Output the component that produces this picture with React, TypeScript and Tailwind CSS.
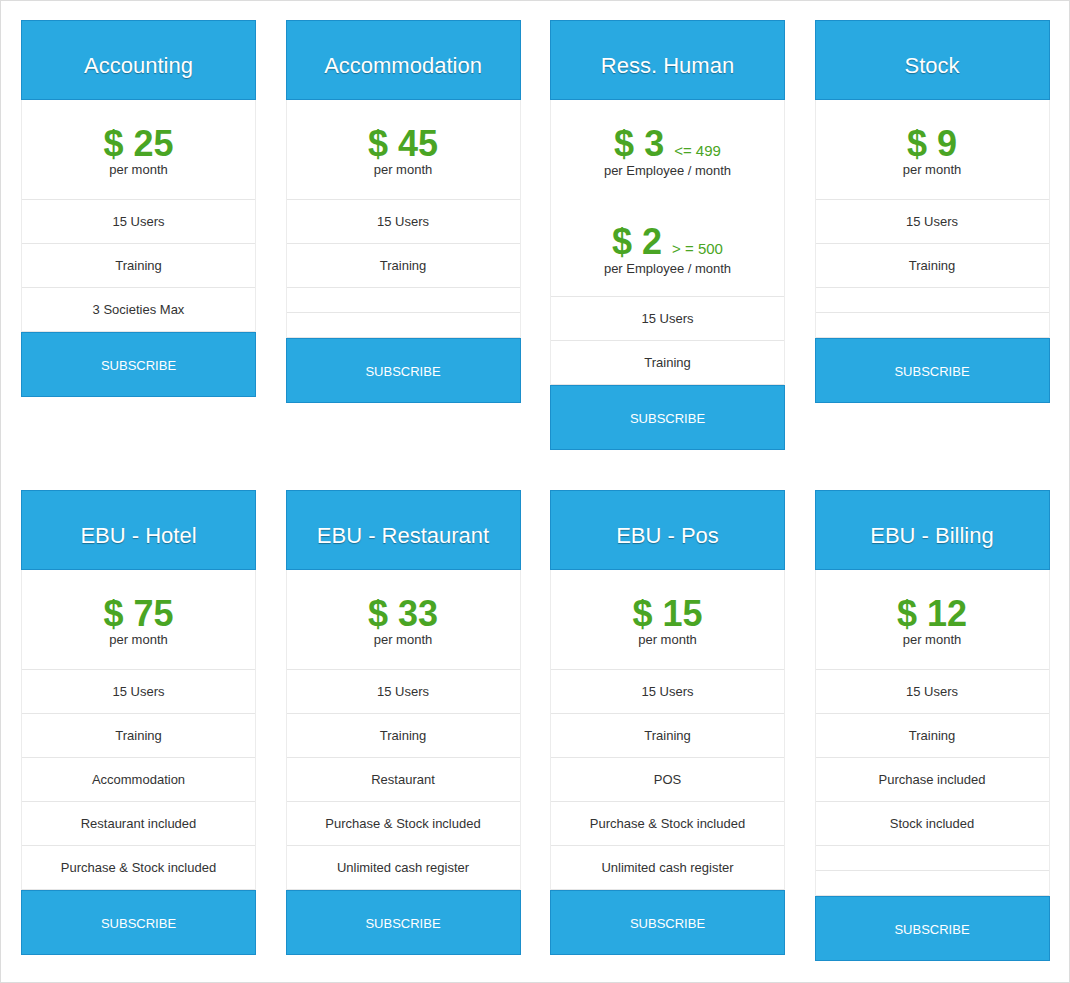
type Price = { amount: string; note?: string; unit: string };

interface Plan {
  name: string;
  prices: Price[];
  rows: string[];
  empty?: number;
}

const PLANS: Plan[] = [
  { name: "Accounting", prices: [{ amount: "25", unit: "per month" }], rows: ["15 Users", "Training", "3 Societies Max"] },
  { name: "Accommodation", prices: [{ amount: "45", unit: "per month" }], rows: ["15 Users", "Training"], empty: 2 },
  {
    name: "Ress. Human",
    prices: [
      { amount: "3", note: "<= 499", unit: "per Employee / month" },
      { amount: "2", note: "> = 500", unit: "per Employee / month" },
    ],
    rows: ["15 Users", "Training"],
  },
  { name: "Stock", prices: [{ amount: "9", unit: "per month" }], rows: ["15 Users", "Training"], empty: 2 },
  {
    name: "EBU - Hotel",
    prices: [{ amount: "75", unit: "per month" }],
    rows: ["15 Users", "Training", "Accommodation", "Restaurant included", "Purchase & Stock included"],
  },
  {
    name: "EBU - Restaurant",
    prices: [{ amount: "33", unit: "per month" }],
    rows: ["15 Users", "Training", "Restaurant", "Purchase & Stock included", "Unlimited cash register"],
  },
  {
    name: "EBU - Pos",
    prices: [{ amount: "15", unit: "per month" }],
    rows: ["15 Users", "Training", "POS", "Purchase & Stock included", "Unlimited cash register"],
  },
  {
    name: "EBU - Billing",
    prices: [{ amount: "12", unit: "per month" }],
    rows: ["15 Users", "Training", "Purchase included", "Stock included"],
    empty: 2,
  },
];

function PlanCard({ plan }: { plan: Plan }) {
  const multi = plan.prices.length > 1;
  return (
    <div className="flex w-[235px] flex-col bg-white">
      {/* header */}
      <div className="flex h-[80px] items-center justify-center border border-[#1b8fcb] bg-[#29a9e1] pt-[10px]">
        <h3 className="text-[22px] text-white [text-shadow:0_1px_1px_rgba(0,0,0,0.35)]">{plan.name}</h3>
      </div>

      <div className="border-x border-[#ececec]">
        {/* prices */}
        <div className="border-b border-[#e6e6e6]">
          {plan.prices.map((p, i) => (
            <div key={i} className={`flex flex-col items-center pt-[26px] ${multi ? "h-[98px]" : "h-[99px]"}`}>
              <div className="flex items-baseline">
                <span className="text-[36px] font-bold leading-[36px] text-[#4aa524]">$ {p.amount}</span>
                {p.note && <span className="ml-[10px] text-[15px] text-[#4aa524]">{p.note}</span>}
              </div>
              <span className="-mt-[1px] text-[13px] leading-[18px] text-[#333]">{p.unit}</span>
            </div>
          ))}
        </div>

        {/* features */}
        {plan.rows.map(r => (
          <div key={r} className="flex h-[44px] items-center justify-center border-b border-[#e6e6e6] text-[13px] text-[#333]">
            {r}
          </div>
        ))}
        {Array.from({ length: plan.empty ?? 0 }).map((_, i) => (
          <div key={`e${i}`} className="h-[25px] border-b border-[#e6e6e6]" />
        ))}
      </div>

      <button className="flex h-[65px] items-center justify-center border border-[#1b8fcb] bg-[#29a9e1] pt-[2px] text-[13px] uppercase text-white">
        Subscribe
      </button>
    </div>
  );
}

export default function App() {
  return (
    <div className="h-[983px] w-[1070px] border border-[#dcdcdc] bg-white pl-[20px] pt-[19px] font-['Liberation_Sans',Arial,sans-serif]">
      <div className="grid grid-cols-[repeat(4,235px)] items-start gap-x-[29.5px] gap-y-[40px]">
        {PLANS.map(p => (
          <PlanCard key={p.name} plan={p} />
        ))}
      </div>
    </div>
  );
}
